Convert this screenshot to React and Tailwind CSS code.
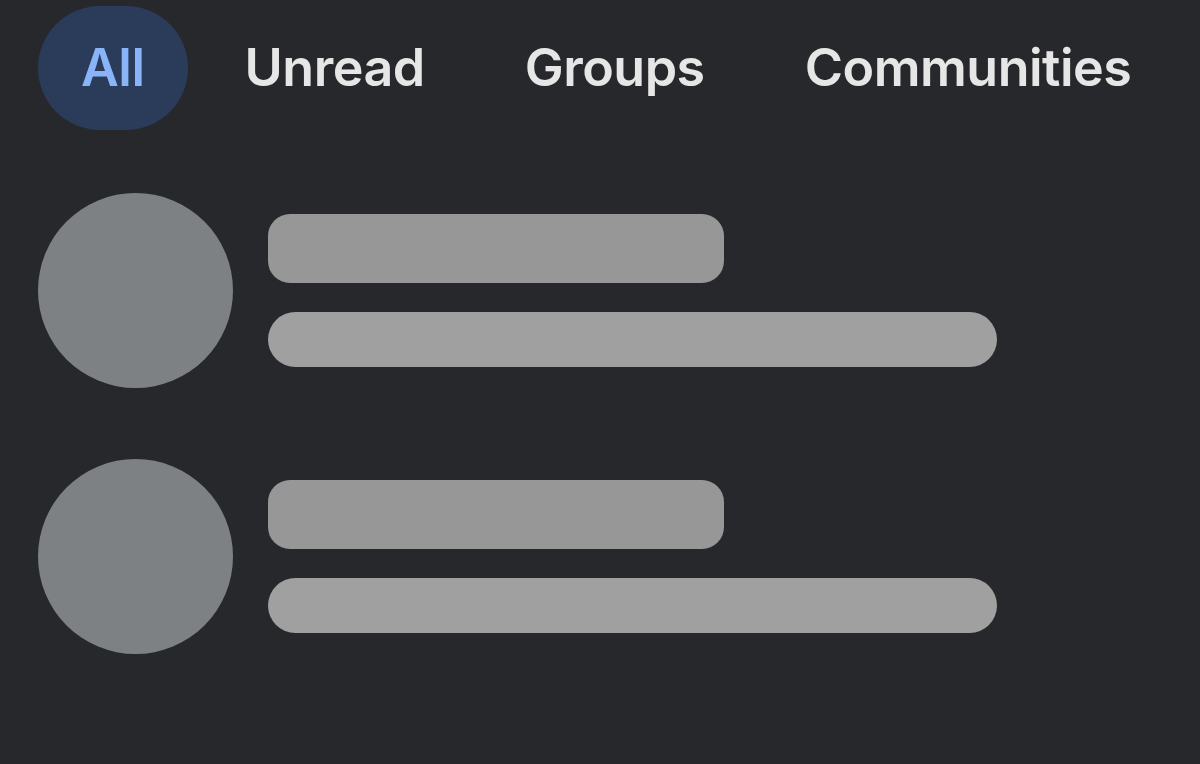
import React from 'react';

const tabs = ['All', 'Unread', 'Groups', 'Communities'];

function ChatSkeleton() {
  return (
    <div className="flex items-center gap-[35px]">
      <div className="w-[195px] h-[195px] rounded-full bg-[#7e8183] shrink-0" />
      <div className="flex flex-col gap-[29px]">
        <div className="w-[456px] h-[69px] rounded-[22px] bg-[#979797]" />
        <div className="w-[729px] h-[55px] rounded-full bg-[#a0a0a0]" />
      </div>
    </div>
  );
}

export default function App() {
  const active = 'All';

  return (
    <div
      className="w-full h-[764px] bg-[#27282b] pl-[38px] pt-[6px] overflow-hidden"
      style={{ fontFamily: 'Inter, "Liberation Sans", Arial, sans-serif' }}
    >
      {/* Filter tabs */}
      <div className="flex items-center gap-[14px]">
        {tabs.map((t) => (
          <div
            key={t}
            className={`h-[124px] px-[43px] flex items-center rounded-full text-[52px] font-semibold tracking-[-0.5px] leading-none ${
              t === active ? 'bg-[#2b3c5b] text-[#8ab4f8]' : 'text-[#e6e6e6]'
            }`}
          >
            {t}
          </div>
        ))}
      </div>

      {/* Chat list placeholders */}
      <div className="mt-[63px] flex flex-col gap-[71px]">
        <ChatSkeleton />
        <ChatSkeleton />
      </div>
    </div>
  );
}
